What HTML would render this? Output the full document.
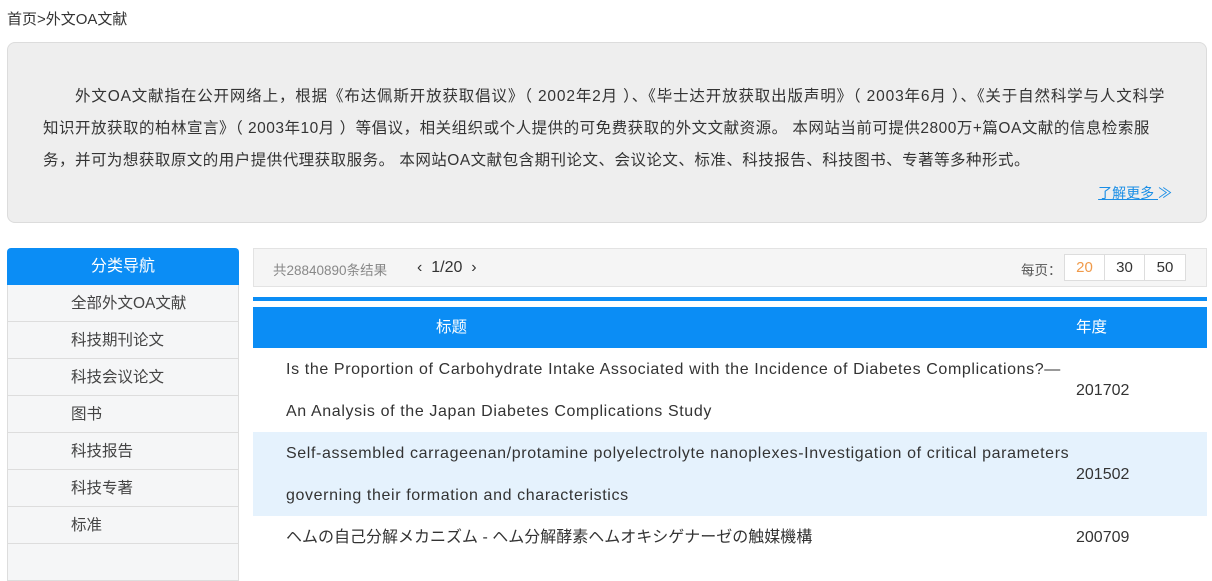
<!DOCTYPE html>
<html><head><meta charset="utf-8"><style>
*{margin:0;padding:0;box-sizing:border-box}
body{width:1212px;height:550px;overflow:hidden;background:#fff;font-family:"Liberation Sans","Noto Sans CJK SC",sans-serif;color:#333;position:relative}
.crumb{position:absolute;left:7px;top:8px;font-size:15px;color:#333}
.intro{position:absolute;left:7px;top:42px;width:1200px;height:181px;background:#eeeeee;border:1px solid #dcdcdc;border-radius:8px;font-size:15.5px;line-height:32px;color:#333}
.intro div{position:absolute;white-space:nowrap}
.more{position:absolute;right:34px;top:134px;color:#1a8ee6;font-size:14px;text-decoration:underline}
.nav{position:absolute;left:7px;top:248px;width:232px}
.nav .h{height:37px;background:#0b8df5;color:#fff;text-align:center;line-height:38px;font-size:16px;border-radius:4px 4px 0 0}
.nav .i{height:37px;background:#f5f6f7;border:1px solid #ddd;border-top:none;padding-left:63px;line-height:38px;font-size:15.5px;color:#444}
.tb{position:absolute;left:253px;top:248px;width:954px;height:39px;background:#f5f5f5;border:1px solid #e3e3e3;font-size:14px}
.blue{position:absolute;left:253px;top:297px;width:954px;height:4px;background:#0b8df5}
.th{position:absolute;left:253px;top:307px;width:954px;height:41px;background:#0b8df5;color:#fff;font-size:15.5px;line-height:42px}
.row{position:absolute;left:253px;width:954px;font-size:16px;color:#333;line-height:42px}
.row .t{position:absolute;left:33px;top:1px;white-space:nowrap;letter-spacing:0.62px}
.row .y{position:absolute;left:823px;top:1px}
</style></head><body>
<div class="crumb">首页&gt;外文OA文献</div>
<div class="intro">
<div style="left:67px;top:38px;letter-spacing:0.85px">外文OA文献指在公开网络上，根据《布达佩斯开放获取倡议》（ 2002年2月 ）、《毕士达开放获取出版声明》（ 2003年6月 ）、《关于自然科学与人文科学</div>
<div style="left:35px;top:70px;letter-spacing:0.5px">知识开放获取的柏林宣言》（ 2003年10月 ）等倡议，相关组织或个人提供的可免费获取的外文文献资源。 本网站当前可提供2800万+篇OA文献的信息检索服</div>
<div style="left:35px;top:102px;letter-spacing:0.48px">务，并可为想获取原文的用户提供代理获取服务。 本网站OA文献包含期刊论文、会议论文、标准、科技报告、科技图书、专著等多种形式。</div>
<span class="more">了解更多 <span style="text-decoration:none;display:inline-block">≫</span></span></div>
<div class="nav"><div class="h">分类导航</div>
<div class="i">全部外文OA文献</div><div class="i">科技期刊论文</div><div class="i">科技会议论文</div><div class="i">图书</div><div class="i">科技报告</div><div class="i">科技专著</div><div class="i">标准</div><div class="i"></div></div>
<div class="tb">
<span style="position:absolute;left:19px;top:10px;color:#888;font-size:13.5px">共28840890条结果</span>
<span style="position:absolute;left:163px;top:10px;color:#333;font-size:16px">‹&nbsp;&nbsp;1/20&nbsp;&nbsp;›</span>
<span style="position:absolute;left:767px;top:10px;color:#555;font-size:13.5px">每页：</span>
<span style="position:absolute;left:810px;top:5px;height:27px;display:flex;border:1px solid #ddd;background:#fff;font-size:15px;line-height:25px">
<span style="width:40px;text-align:center;color:#f09a4a;border-right:1px solid #ddd">20</span><span style="width:40px;text-align:center;border-right:1px solid #ddd">30</span><span style="width:40px;text-align:center">50</span></span>
</div>
<div class="blue"></div>
<div class="th"><span style="position:absolute;left:183px">标题</span><span style="position:absolute;left:823px">年度</span></div>
<div class="row" style="top:348px;height:84px"><div class="t">Is the Proportion of Carbohydrate Intake Associated with the Incidence of Diabetes Complications?—<br>An Analysis of the Japan Diabetes Complications Study</div><div class="y" style="top:22px">201702</div></div>
<div class="row" style="top:432px;height:84px;background:#e5f2fd"><div class="t">Self-assembled carrageenan/protamine polyelectrolyte nanoplexes-Investigation of critical parameters<br>governing their formation and characteristics</div><div class="y" style="top:22px">201502</div></div>
<div class="row" style="top:516px;height:42px"><div class="t" style="letter-spacing:0">ヘムの自己分解メカニズム - ヘム分解酵素ヘムオキシゲナーゼの触媒機構</div><div class="y">200709</div></div>
</body></html>
